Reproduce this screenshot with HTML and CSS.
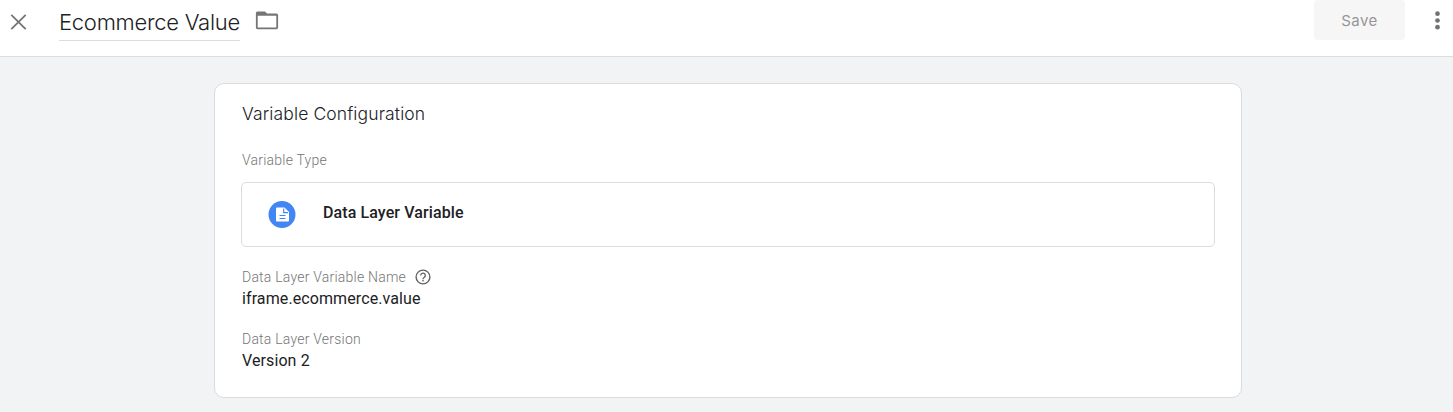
FILE: index.html
```html
<!DOCTYPE html>
<html lang="en">
<head>
<meta charset="utf-8">
<title>Ecommerce Value</title>
<link rel="stylesheet" href="styles.css">
</head>
<body>
<header class="header">
  <svg class="close" width="17" height="16" viewBox="0 0 17 16"><path d="M1.3 .8l14.4 14.4M15.700 .8L1.300 15.200" fill="none" stroke="#757575" stroke-width="1.8"/></svg>
  <h1 class="title"><span class="title-text">Ecommerce Value</span></h1>
  <svg class="folder" width="24" height="20" viewBox="0 0 24 20"><path fill="#757575" fill-rule="evenodd" d="M2.500 .5h7.500l2 2h9.500a1.600 1.600 0 0 1 1.600 1.600V16.600a1.600 1.600 0 0 1-1.600 1.600H2.500a1.600 1.600 0 0 1-1.600-1.600V2.100a1.600 1.600 0 0 1 1.600-1.600zM2.700 4.700v11.700h18.600V4.700z"/></svg>
  <button class="save" disabled><span class="save-text">Save</span></button>
  <svg class="more" width="6" height="20" viewBox="0 0 6 20"><g fill="#6f7276"><circle cx="3.500" cy="3.700" r="2.350"/><circle cx="3.500" cy="10.500" r="2.350"/><circle cx="3.500" cy="17.200" r="2.350"/></g></svg>
</header>
<main class="main">
  <section class="card">
    <h2 class="heading"><span class="heading-text">Variable Configuration</span></h2>
    <div class="label type-label"><span>Variable Type</span></div>
    <div class="type-box">
      <svg class="type-icon" width="28" height="28" viewBox="0 0 28 28"><circle cx="14" cy="14.500" r="13.500" fill="#4285f4"/><path fill="#fff" d="M9 7.500h7.500l4.500 4.500V20.500a1 1 0 0 1-1 1H9a1 1 0 0 1-1-1V8.500a1 1 0 0 1 1-1z"/><path d="M15.700 8.500v4.200H20M11.500 15.500h6M11.500 18.500h6" fill="none" stroke="#4285f4" stroke-width="1.200"/></svg>
      <span class="type-name">Data Layer Variable</span>
    </div>
    <div class="label name-label"><span>Data Layer Variable Name</span>
      <svg class="help" width="16" height="16" viewBox="0 0 16 16"><circle cx="8" cy="8" r="6.900" fill="none" stroke="#616161" stroke-width="1.400"/><path d="M5.700 6.500a2.300 2.300 0 1 1 3.700 1.800C8.600 8.900 8 9.200 8 10.200" fill="none" stroke="#616161" stroke-width="1.300"/><rect x="7.300" y="11" width="1.400" height="1.400" fill="#616161"/></svg>
    </div>
    <div class="value">iframe.ecommerce.value</div>
    <div class="label version-label"><span>Data Layer Version</span></div>
    <div class="value">Version 2</div>
  </section>
</main>
</body>
</html>
```
FILE: styles.css
```css
* { box-sizing: border-box; }
body {
  margin: 0;
  height: 412px;
  overflow: hidden;
  background: #f1f3f4;
  color: #212124;
  font-family: Roboto, sans-serif;
}
svg { display: block; flex: none; }
.header {
  display: flex;
  align-items: flex-start;
  height: 57px;
  padding-left: 10px;
  background: #fff;
  border-bottom: 1px solid #dadce0;
}
.close { margin-top: 14px; }
.title {
  width: 181px;
  height: 41px;
  margin: 0 0 0 32px;
  padding-top: 8px;
  border-bottom: 1px solid #dadce0;
  font: 350 22px/28px Inter, sans-serif;
  white-space: nowrap;
}
.title-text { letter-spacing: -0.27px; }
.folder { margin: 11px 0 0 15px; }
.save {
  width: 91px;
  height: 40px;
  margin: 0 29px 0 auto;
  padding: 1px 0 0;
  border: 0;
  border-radius: 4px;
  background: #f6f6f6;
  color: #969696;
  font: 400 15px/39px Inter, sans-serif;
}
.save-text { letter-spacing: 0.5px; }
.more { margin: 10px 13px 0 0; }
.main { padding: 26px 0 0 214px; }
.card {
  width: 1027.5px;
  height: 315px;
  padding: 18px 25.5px 0 26px;
  background: #fff;
  border: 1px solid #dadce0;
  border-radius: 10px;
}
.heading {
  margin: 0 0 0 1px;
  font: 350 17.5px/24px Inter, sans-serif;
}
.heading-text { letter-spacing: 0.12px; }
.label {
  display: flex;
  align-items: center;
  height: 20px;
  padding-left: 1px;
  color: #757575;
  font-size: 14px;
  font-weight: 300;
  line-height: 20px;
  letter-spacing: 0.22px;
}
.type-label { margin-top: 24px; }
.type-box {
  display: flex;
  align-items: flex-start;
  height: 65px;
  margin-top: 12px;
  padding-left: 26px;
  border: 1px solid #dadce0;
  border-radius: 5px;
}
.type-icon { margin-top: 17px; }
.type-name {
  margin: 18px 0 0 27px;
  font-size: 16px;
  font-weight: 500;
  line-height: 24px;
  letter-spacing: 0.1px;
}
.name-label { margin-top: 20px; }
.help { margin-left: 9px; }
.value {
  height: 22px;
  padding: 1px 0 0 1px;
  font-size: 16px;
  line-height: 22px;
  letter-spacing: 0.1px;
}
.version-label { margin-top: 20px; }
```
